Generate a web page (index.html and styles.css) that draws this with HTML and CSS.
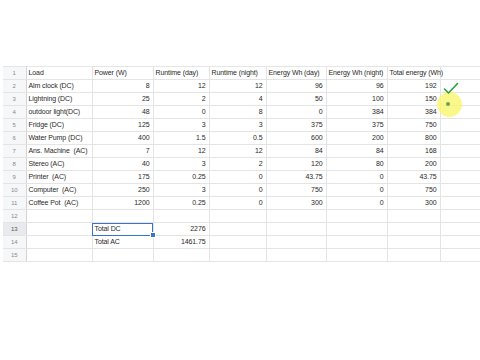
FILE: index.html
```html
<!DOCTYPE html>
<html>
<head>
<meta charset="utf-8">
<link rel="stylesheet" href="styles.css">
</head>
<body>
<div class="sheet">
  <table class="grid">
    <colgroup>
      <col class="c-rn"><col class="c-a"><col class="c-b"><col class="c-c"><col class="c-d"><col class="c-e"><col class="c-f"><col class="c-g"><col class="c-h">
    </colgroup>
    <tbody>
      <tr class="head"><td class="rn">1</td><td>Load</td><td>Power (W)</td><td>Runtime (day)</td><td>Runtime (night)</td><td>Energy Wh (day)</td><td>Energy Wh (night)</td><td class="spill">Total energy (Wh)</td><td></td></tr>
      <tr><td class="rn">2</td><td>Alm clock (DC)</td><td class="n">8</td><td class="n">12</td><td class="n">12</td><td class="n">96</td><td class="n">96</td><td class="n">192</td><td></td></tr>
      <tr><td class="rn">3</td><td>Lightning (DC)</td><td class="n">25</td><td class="n">2</td><td class="n">4</td><td class="n">50</td><td class="n">100</td><td class="n">150</td><td></td></tr>
      <tr><td class="rn">4</td><td>outdoor light(DC)</td><td class="n">48</td><td class="n">0</td><td class="n">8</td><td class="n">0</td><td class="n">384</td><td class="n">384</td><td></td></tr>
      <tr><td class="rn">5</td><td>Fridge (DC)</td><td class="n">125</td><td class="n">3</td><td class="n">3</td><td class="n">375</td><td class="n">375</td><td class="n">750</td><td></td></tr>
      <tr><td class="rn">6</td><td>Water Pump (DC)</td><td class="n">400</td><td class="n">1.5</td><td class="n">0.5</td><td class="n">600</td><td class="n">200</td><td class="n">800</td><td></td></tr>
      <tr><td class="rn">7</td><td>Ans. Machine&nbsp; (AC)</td><td class="n">7</td><td class="n">12</td><td class="n">12</td><td class="n">84</td><td class="n">84</td><td class="n">168</td><td></td></tr>
      <tr><td class="rn">8</td><td>Stereo (AC)</td><td class="n">40</td><td class="n">3</td><td class="n">2</td><td class="n">120</td><td class="n">80</td><td class="n">200</td><td></td></tr>
      <tr><td class="rn">9</td><td>Printer&nbsp; (AC)</td><td class="n">175</td><td class="n">0.25</td><td class="n">0</td><td class="n">43.75</td><td class="n">0</td><td class="n">43.75</td><td></td></tr>
      <tr><td class="rn">10</td><td>Computer&nbsp; (AC)</td><td class="n">250</td><td class="n">3</td><td class="n">0</td><td class="n">750</td><td class="n">0</td><td class="n">750</td><td></td></tr>
      <tr><td class="rn">11</td><td>Coffee Pot&nbsp; (AC)</td><td class="n">1200</td><td class="n">0.25</td><td class="n">0</td><td class="n">300</td><td class="n">0</td><td class="n">300</td><td></td></tr>
      <tr><td class="rn">12</td><td></td><td></td><td></td><td></td><td></td><td></td><td></td><td></td></tr>
      <tr><td class="rn sel-row">13</td><td></td><td class="sel">Total DC<span class="handle"></span></td><td class="n">2276</td><td></td><td></td><td></td><td></td><td></td></tr>
      <tr><td class="rn">14</td><td></td><td>Total AC</td><td class="n">1461.75</td><td></td><td></td><td></td><td></td><td></td></tr>
      <tr><td class="rn">15</td><td></td><td></td><td></td><td></td><td></td><td></td><td></td><td></td></tr>
    </tbody>
  </table>
  <div class="cursor"><span class="dot"></span></div>
  <svg class="check" width="16" height="13" viewBox="0 0 16 13"><path d="M1.5 7 L5.5 11 L14.5 1.5" fill="none" stroke="#2e9e3a" stroke-width="1.6" stroke-linecap="round" stroke-linejoin="round"/></svg>
</div>
</body>
</html>
```
FILE: styles.css
```css
html, body {
  margin: 0;
  padding: 0;
  background: #ffffff;
}
body {
  width: 480px;
  height: 360px;
  overflow: hidden;
  font-family: "Liberation Sans", Arial, sans-serif;
}
.sheet {
  position: relative;
  padding-top: 66px;
  padding-left: 3px;
}
.grid {
  border-collapse: collapse;
  table-layout: fixed;
  width: 477px;
  border-top: 1px solid #e6e6e6;
}
.c-rn { width: 23px; }
.c-a { width: 66px; }
.c-b { width: 61px; }
.c-c { width: 56px; }
.c-d { width: 57px; }
.c-e { width: 60px; }
.c-f { width: 61px; }
.c-g { width: 53px; }
.c-h { width: 40px; }
.grid td {
  height: 13px;
  padding: 0 2px 0 2px;
  border-right: 1px solid #e4e4e4;
  border-bottom: 1px solid #e4e4e4;
  font-size: 7px;
  letter-spacing: -0.1px;
  line-height: 12px;
  color: #2a2a2a;
  white-space: nowrap;
  overflow: hidden;
  box-sizing: border-box;
}
.grid td.n {
  padding-right: 3px;
}
.grid td:last-child {
  border-right: none;
}
.grid td.n {
  text-align: right;
}
.grid td.spill {
  overflow: visible;
}
.grid td.rn {
  background: #f6f7f8;
  color: #8a8a8a;
  text-align: center;
  font-size: 6px;
  letter-spacing: 0;
  border-right: 1px solid #d4d4d4;
  padding: 0;
}
.grid td.sel-row {
  background: #e8eaed;
  color: #555;
}
.grid td.sel {
  position: relative;
  overflow: visible;
  outline: 1.5px solid #3b73cc;
  outline-offset: -1px;
}
.handle {
  position: absolute;
  right: -3px;
  bottom: -3px;
  width: 4px;
  height: 4px;
  background: #3b73cc;
  border: 1px solid #ffffff;
}
.check {
  position: absolute;
  left: 443px;
  top: 82px;
}
.cursor {
  position: absolute;
  left: 437px;
  top: 92px;
  width: 25px;
  height: 25px;
  border-radius: 50%;
  background: rgba(250, 246, 110, 0.8);
  display: flex;
  align-items: center;
  justify-content: center;
}
.dot {
  width: 4px;
  height: 4px;
  margin-left: -4px;
  margin-top: -2px;
  border-radius: 50%;
  background: #6aa34a;
}
```
